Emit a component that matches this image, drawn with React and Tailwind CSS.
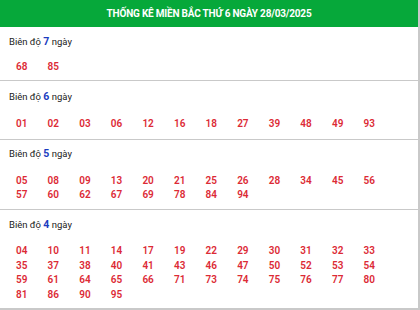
import React from 'react';

const sections = [
  { days: 7, nums: ['68', '85'], pad: 'pt-[8px] pb-[6px]', gap: 'mt-[11px]', lead: 'leading-[14px]' },
  { days: 6, nums: ['01', '02', '03', '06', '12', '16', '18', '27', '39', '48', '49', '93'], pad: 'pt-[9px] pb-[8px]', gap: 'mt-[13px]', lead: 'leading-[14px]' },
  { days: 5, nums: ['05', '08', '09', '13', '20', '21', '25', '26', '28', '34', '45', '56', '57', '60', '62', '67', '69', '78', '84', '94'], pad: 'pt-[7px] pb-[8px]', gap: 'mt-[13px]', lead: 'leading-[13.5px]' },
  { days: 4, nums: ['04', '10', '11', '14', '17', '19', '22', '29', '30', '31', '32', '33', '35', '37', '38', '40', '41', '43', '46', '47', '50', '52', '53', '54', '59', '61', '64', '65', '66', '71', '73', '74', '75', '76', '77', '80', '81', '86', '90', '95'], pad: 'pt-[8px] pb-[6px]', gap: 'mt-[12px]', lead: 'leading-[14.5px]' },
];

export default function App() {
  return (
    <div className="w-[420px] bg-white font-['Roboto',sans-serif]">
      <div className="border-r-2 border-b-2 border-[#c9c9c9]">
        {/* header */}
        <div className="h-[27px] bg-[#06a83a] flex items-center justify-center text-white font-bold text-[10px] tracking-[-0.2px]">
          THỐNG KÊ MIỀN BẮC THỨ 6 NGÀY 28/03/2025
        </div>

        {sections.map((s, i) => (
          <div key={s.days} className={`${s.pad} ${i < sections.length - 1 ? 'border-b border-[#c9c9c9]' : ''}`}>
            <div className="pl-[9px] text-[9.5px] leading-[14px] text-[#222]">
              Biên độ <span className="text-[#1a3cc0] font-bold text-[10.5px]">{s.days}</span> ngày
            </div>
            <div className={`${s.gap} pl-[16px] grid grid-cols-[repeat(12,31.6px)] text-[10px] ${s.lead} font-semibold text-[#dc2a35]`}>
              {s.nums.map((n) => (
                <span key={n}>{n}</span>
              ))}
            </div>
          </div>
        ))}
      </div>
    </div>
  );
}
